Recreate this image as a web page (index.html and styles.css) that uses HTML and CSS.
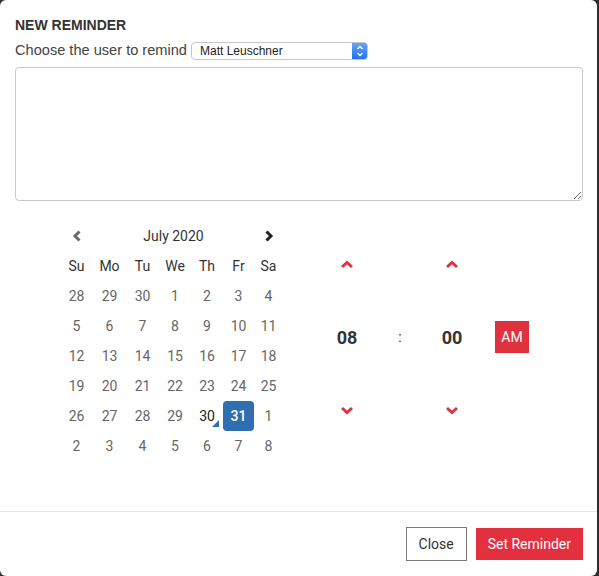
FILE: index.html
```html
<!DOCTYPE html>
<html>

<head>
    <meta charset="UTF-8">
    <title>New reminder</title>
    <link rel="stylesheet" href="styles.css">
</head>

<body>
    <div class="modal">
        <div class="modal-body">
            <h4 class="title">NEW REMINDER</h4>
            <div class="user-row">
                <label>Choose the user to remind</label>
                <div class="select">
                    <span class="select-text">Matt Leuschner</span>
                    <span class="stepper">
                        <svg width="16" height="18" viewBox="0 0 16 18">
                            <polyline points="5.5,7 8,4.5 10.5,7" fill="none" stroke="#fff" stroke-width="1.3"/>
                            <polyline points="5.5,11 8,13.5 10.5,11" fill="none" stroke="#fff" stroke-width="1.3"/>
                        </svg>
                    </span>
                </div>
            </div>
            <textarea class="note"></textarea>

            <div class="picker">
                <!-- calendar -->
                <div class="calendar">
                    <span class="nav">
                        <svg width="10" height="12" viewBox="0 0 10 12"><polyline points="7.5,1.5 3,6 7.5,10.5" fill="none" stroke="#6b6b6b" stroke-width="3"/></svg>
                    </span>
                    <span class="month">July 2020</span>
                    <span class="nav">
                        <svg width="10" height="12" viewBox="0 0 10 12"><polyline points="2.5,1.5 7,6 2.5,10.5" fill="none" stroke="#222" stroke-width="3"/></svg>
                    </span>

                    <span class="dow">Su</span><span class="dow">Mo</span><span class="dow">Tu</span><span class="dow">We</span><span class="dow">Th</span><span class="dow">Fr</span><span class="dow">Sa</span>

                    <span class="day">28</span><span class="day">29</span><span class="day">30</span><span class="day">1</span><span class="day">2</span><span class="day">3</span><span class="day">4</span>
                    <span class="day">5</span><span class="day">6</span><span class="day">7</span><span class="day">8</span><span class="day">9</span><span class="day">10</span><span class="day">11</span>
                    <span class="day">12</span><span class="day">13</span><span class="day">14</span><span class="day">15</span><span class="day">16</span><span class="day">17</span><span class="day">18</span>
                    <span class="day">19</span><span class="day">20</span><span class="day">21</span><span class="day">22</span><span class="day">23</span><span class="day">24</span><span class="day">25</span>
                    <span class="day">26</span><span class="day">27</span><span class="day">28</span><span class="day">29</span><span class="day today">30</span><span class="day active">31</span><span class="day">1</span>
                    <span class="day">2</span><span class="day">3</span><span class="day">4</span><span class="day">5</span><span class="day">6</span><span class="day">7</span><span class="day">8</span>
                </div>

                <!-- time -->
                <div class="time">
                    <span class="arrow"><svg width="14" height="9" viewBox="0 0 14 9"><polyline points="2,7 7,2.5 12,7" fill="none" stroke="#e0313f" stroke-width="3"/></svg></span>
                    <span></span>
                    <span class="arrow"><svg width="14" height="9" viewBox="0 0 14 9"><polyline points="2,7 7,2.5 12,7" fill="none" stroke="#e0313f" stroke-width="3"/></svg></span>
                    <span></span>

                    <span class="num">08</span>
                    <span class="sep">:</span>
                    <span class="num">00</span>
                    <span class="ampm-cell"><button class="ampm">AM</button></span>

                    <span class="arrow"><svg width="14" height="9" viewBox="0 0 14 9"><polyline points="2,2 7,6.5 12,2" fill="none" stroke="#e0313f" stroke-width="3"/></svg></span>
                    <span></span>
                    <span class="arrow"><svg width="14" height="9" viewBox="0 0 14 9"><polyline points="2,2 7,6.5 12,2" fill="none" stroke="#e0313f" stroke-width="3"/></svg></span>
                    <span></span>
                </div>
            </div>
        </div>
        <div class="modal-footer">
            <button class="btn btn-close">Close</button>
            <button class="btn btn-primary">Set Reminder</button>
        </div>
    </div>
</body>

</html>
```

FILE: styles.css
```css
body {
    margin: 0;
    background-color: #2d2d2d;
    font-family: Roboto, "Liberation Sans", sans-serif;
}

.modal {
    width: 597px;
    height: 576px;
    background-color: white;
    border-radius: 6px;
    overflow: hidden;
}

.modal-body {
    padding: 15px 14px 50px 15px;
}

.title {
    margin: 0;
    font-family: "Liberation Sans", Arial, sans-serif;
    font-size: 14px;
    font-weight: bold;
    line-height: 20px;
    color: #333;
}

.user-row {
    display: flex;
    align-items: center;
    height: 20px;
    margin-top: 5px;
}

.user-row label {
    font-family: "Liberation Sans", Arial, sans-serif;
    font-size: 14.6px;
    color: #444;
}

.select {
    display: flex;
    align-items: center;
    align-self: flex-end;
    width: 177px;
    height: 18px;
    margin-left: 4px;
    box-sizing: border-box;
    border: 1px solid #c6c6c6;
    border-radius: 4px;
    overflow: hidden;
}

.select-text {
    flex: 1;
    padding-left: 8px;
    font-family: "Liberation Sans", Arial, sans-serif;
    font-size: 12px;
    color: #222;
}

.stepper {
    display: flex;
    width: 16px;
    height: 18px;
    margin-right: -1px;
    background: linear-gradient(#69a7fb, #1c6ef2);
}

.note {
    display: block;
    width: 100%;
    height: 134px;
    margin-top: 7px;
    box-sizing: border-box;
    border: 1px solid #c8c8c8;
    border-radius: 4px;
    resize: vertical;
}

.picker {
    display: flex;
    margin-top: 20px;
}

.calendar {
    display: grid;
    grid-template-columns: 33px 33px 33px 32px 32px 31px 29px;
    grid-auto-rows: 30px;
    margin-left: 45px;
    font-size: 14px;
}

.calendar span {
    display: flex;
    align-items: center;
    justify-content: center;
}

.month {
    grid-column: span 5;
    color: #333;
}

.dow {
    color: #333;
}

.day {
    position: relative;
    color: #666;
    border-radius: 4px;
}

.day.today {
    color: #222;
}

.day.today::before {
    content: "";
    position: absolute;
    right: 4px;
    bottom: 4px;
    border-style: solid;
    border-color: transparent;
    border-width: 0 0 7px 7px;
    border-bottom-color: #2f6eb0;
}

.day.active {
    background-color: #2f6eb0;
    color: white;
    font-weight: 500;
}

.time {
    display: grid;
    grid-template-columns: 50px 56px 48px 72px;
    grid-template-rows: 30px 116px 30px;
    margin-top: 28px;
    margin-left: 39px;
}

.time span {
    display: flex;
    align-items: center;
    justify-content: center;
}

.num {
    font-size: 18px;
    font-weight: bold;
    color: #333;
}

.sep {
    font-size: 14px;
    color: #333;
}

.ampm {
    width: 34px;
    height: 32px;
    padding: 0;
    border: none;
    background-color: #e0313f;
    color: white;
    font-family: Roboto, sans-serif;
    font-size: 14px;
}

.modal-footer {
    display: flex;
    justify-content: flex-end;
    align-items: center;
    gap: 9px;
    padding: 15px 14px;
    border-top: 1px solid #e5e5e5;
}

.btn {
    font-family: Roboto, sans-serif;
    font-size: 14px;
    cursor: pointer;
}

.btn-close {
    height: 34px;
    padding: 0 12px;
    border: 1px solid #7a7a7a;
    background-color: white;
    color: #333;
}

.btn-primary {
    height: 32px;
    padding: 0 12px;
    border: none;
    background-color: #e3303f;
    color: white;
}
```
